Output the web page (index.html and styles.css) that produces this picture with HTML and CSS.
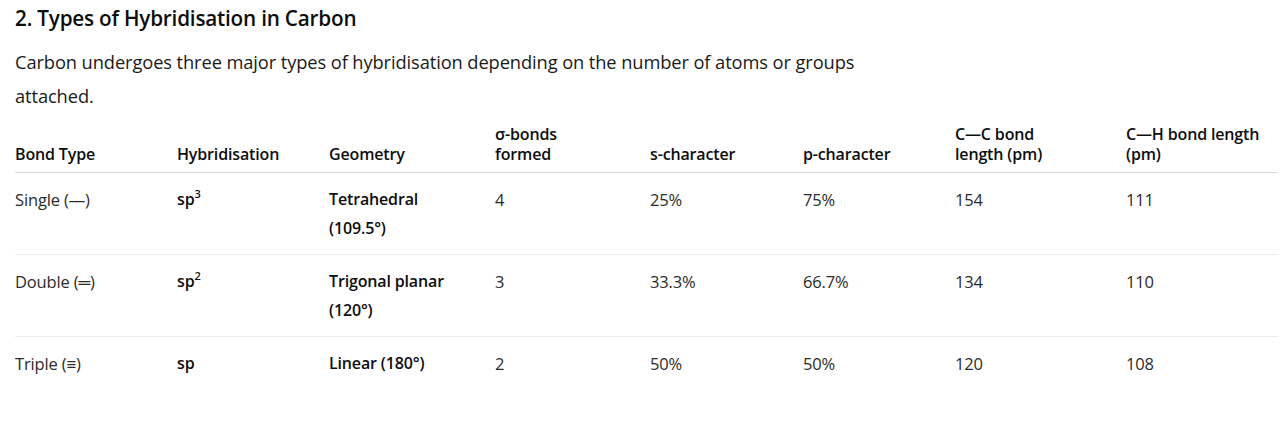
FILE: index.html
```html
<!DOCTYPE html>
<html>
<head>
<meta charset="utf-8">
<link rel="stylesheet" href="styles.css">
</head>
<body>
<main class="doc">
  <h2 class="title">2. Types of Hybridisation in Carbon</h2>
  <p class="lead">Carbon undergoes three major types of hybridisation depending on the number of atoms or groups attached.</p>
  <table class="grid">
    <thead>
      <tr>
        <th class="c1">Bond Type</th>
        <th class="c2">Hybridisation</th>
        <th class="c3">Geometry</th>
        <th class="c4">σ-bonds<br>formed</th>
        <th class="c5">s-character</th>
        <th class="c6">p-character</th>
        <th class="c7">C—C bond<br>length (pm)</th>
        <th class="c8">C—H bond length<br>(pm)</th>
      </tr>
    </thead>
    <tbody>
      <tr>
        <td>Single (—)</td>
        <td class="em">sp<sup>3</sup></td>
        <td class="em">Tetrahedral<br>(109.5°)</td>
        <td>4</td>
        <td>25%</td>
        <td>75%</td>
        <td>154</td>
        <td>111</td>
      </tr>
      <tr>
        <td>Double (═)</td>
        <td class="em">sp<sup>2</sup></td>
        <td class="em">Trigonal planar<br>(120°)</td>
        <td>3</td>
        <td>33.3%</td>
        <td>66.7%</td>
        <td>134</td>
        <td>110</td>
      </tr>
      <tr>
        <td>Triple (≡)</td>
        <td class="em">sp</td>
        <td class="em">Linear (180°)</td>
        <td>2</td>
        <td>50%</td>
        <td>50%</td>
        <td>120</td>
        <td>108</td>
      </tr>
    </tbody>
  </table>
</main>
</body>
</html>
```

FILE: styles.css
```css
html, body {
  margin: 0;
  padding: 0;
  background: #ffffff;
}
body {
  font-family: "Open Sans", "Noto Sans", "Liberation Sans", sans-serif;
  color: #0d0d0d;
}
.doc {
  padding: 0 2px 0 15px;
}
.title {
  margin: 0;
  padding-top: 5px;
  font-size: 20.7px;
  font-weight: 600;
  line-height: 26px;
  letter-spacing: -0.2px;
}
.lead {
  margin: 14px 0 0;
  width: 870px;
  font-size: 18.3px;
  line-height: 34px;
  color: #1a1a1a;
  letter-spacing: -0.1px;
}
.grid {
  margin-top: 11px;
  width: 1263px;
  border-collapse: collapse;
  table-layout: fixed;
  letter-spacing: -0.15px;
}
.grid th {
  text-align: left;
  vertical-align: bottom;
  font-size: 16px;
  font-weight: 600;
  line-height: 20px;
  padding: 0 4px 8px 0;
  border-bottom: 1px solid #d9d9d9;
  color: #0d0d0d;
  white-space: nowrap;
}
.grid td {
  vertical-align: top;
  font-size: 16.5px;
  line-height: 29px;
  padding: 12px 4px 11px 0;
  border-bottom: 1px solid #ececec;
  color: #2b2b2b;
  white-space: nowrap;
}
.grid td.em {
  font-size: 16px;
  font-weight: 600;
  color: #0d0d0d;
}
.grid tbody tr:last-child td {
  border-bottom: none;
}
.grid sup {
  font-size: 11px;
  line-height: 0;
  vertical-align: 7px;
}
.c1 { width: 158px; }
.c2 { width: 148px; }
.c3 { width: 162px; }
.c4 { width: 151px; }
.c5 { width: 149px; }
.c6 { width: 148px; }
.c7 { width: 167px; }
.c8 { width: auto; }
```
